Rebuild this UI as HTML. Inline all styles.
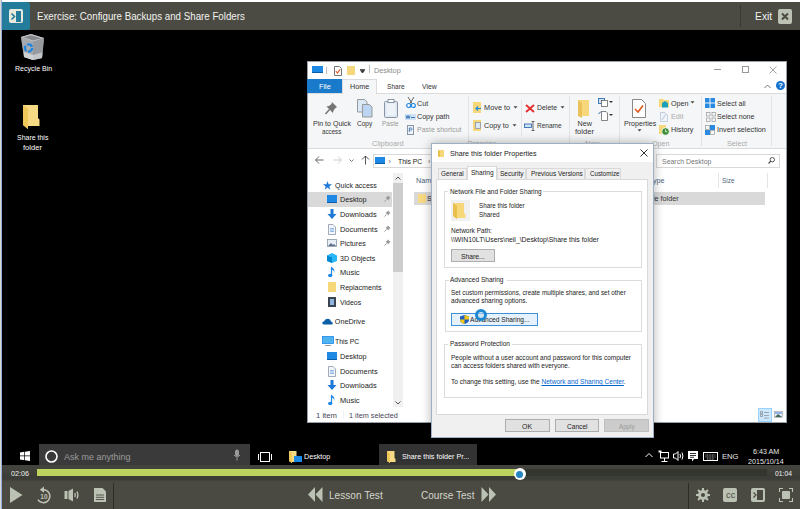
<!DOCTYPE html>
<html><head><meta charset="utf-8">
<style>
*{margin:0;padding:0;box-sizing:border-box}
html,body{width:800px;height:509px;overflow:hidden;background:#000;font-family:"Liberation Sans",sans-serif;position:relative}
.a{position:absolute}
.t{position:absolute;white-space:nowrap;line-height:1;transform-origin:0 0}
svg{position:absolute;overflow:visible}
</style></head><body>
<div class="a" style="left:0px;top:2px;width:800px;height:28px;background:#4b4b44"></div>
<div class="a" style="left:0px;top:2px;width:30px;height:28px;background:#237c9a;border-radius:0 3px 2px 0"></div>
<div class="a" style="left:9px;top:9px;width:14px;height:14px;background:#e8e9dd;border-radius:2px"></div>
<div class="a" style="left:16px;top:10.5px;width:5px;height:11px;background:#237c9a"></div>
<svg style="left:11px;top:13px" width="5" height="7"><path d="M0.5 0.5 L3.5 3.5 L0.5 6.5" stroke="#237c9a" stroke-width="1.6" fill="none"/></svg>
<div class="t" style="left:37px;top:12px;font-size:10.0px;color:#f2f2ee;transform:scaleX(0.974);">Exercise: Configure Backups and Share Folders</div>
<div class="a" style="left:740px;top:5px;width:1px;height:22px;background:#3a3a34"></div>
<div class="t" style="left:755px;top:12px;font-size:10.0px;color:#f2f2ee;transform:scaleX(1.031);">Exit</div>
<div class="a" style="left:778px;top:9px;width:14px;height:15px;background:#bcc2b3;border-radius:2px"></div>
<svg style="left:781px;top:12px" width="8" height="9"><path d="M1 1.5 L7 7.5 M7 1.5 L1 7.5" stroke="#4b4b44" stroke-width="2"/></svg>
<div class="a" style="left:0px;top:0px;width:800px;height:2px;background:#fff"></div>
<svg style="left:20px;top:33px" width="26" height="28"><path d="M1 4 L11 1 L24 5 L22 25 L13 27 L4 24Z" fill="#8e9297"/><path d="M1 4 L13 8.5 L13 27 L4 24Z" fill="#a6aaae"/><path d="M13 8.5 L24 5 L22 25 L13 27Z" fill="#979ba0"/><path d="M1 4 L11 1 L24 5 L13 8.5Z" fill="#c3c6c9"/><path d="M3.5 4.3 L11 2.2 L21.5 5.2 L13 7.6Z" fill="#85898e"/><path d="M4 19 L13 22 L13 27 L4 24Z" fill="#cfd2d5"/><path d="M13 22 L22.3 19.5 L22 25 L13 27Z" fill="#c4c7ca"/><circle cx="8.5" cy="15" r="3.6" stroke="#1e86e0" stroke-width="2.3" fill="none" stroke-dasharray="6 1.5"/></svg>
<div class="t" style="left:14.5px;top:65px;font-size:7.2px;color:#fff;transform:scaleX(0.980);">Recycle Bin</div>
<svg style="left:23px;top:105px" width="17" height="25"><path d="M0 0 H15 V13 L16.5 14.5 V21 H5 L5 24 L0 20Z" fill="#f8da84"/><path d="M0 0 L5 3.5 V24 L0 20Z" fill="#f0c85a"/></svg>
<div class="t" style="left:17px;top:134px;font-size:7.2px;color:#fff;transform:scaleX(0.969);">Share this</div>
<div class="t" style="left:23px;top:144px;font-size:7.2px;color:#fff;transform:scaleX(1.056);">folder</div>
<div class="a" style="left:307px;top:61px;width:480px;height:362px;background:#fff;border:1px solid #9aa0a8"></div>
<div class="a" style="left:312px;top:66px;width:11px;height:7px;background:#1e88e5;border-bottom:1px solid #0d5ea8"></div>
<div class="a" style="left:326px;top:67px;width:1px;height:7px;background:#bbb"></div>
<svg style="left:334px;top:66px" width="8" height="10"><path d="M0.5 0.5 H5.5 L7.5 2.5 V9.5 H0.5Z" stroke="#777" fill="#fff"/><path d="M1.8 5 L3.5 7 L6.2 3.3" stroke="#e0561b" stroke-width="1.1" fill="none"/></svg>
<div class="a" style="left:347px;top:66px;width:8px;height:9px;background:#f6d87a"></div>
<svg style="left:360px;top:69px" width="6" height="5"><path d="M0 0.5 H5 M0.5 1.5 L2.5 4 L4.5 1.5Z" stroke="#333" fill="#333" stroke-width="0.8"/></svg>
<div class="a" style="left:369px;top:65px;width:1px;height:8px;background:#bbb"></div>
<div class="t" style="left:374px;top:67px;font-size:7.0px;color:#8a8a8a;transform:scaleX(1.040);">Desktop</div>
<div class="a" style="left:714px;top:69px;width:7px;height:1px;background:#999"></div>
<div class="a" style="left:742px;top:66px;width:7px;height:7px;border:1px solid #999"></div>
<svg style="left:769px;top:66px" width="8" height="8"><path d="M0.5 0.5 L7.5 7.5 M7.5 0.5 L0.5 7.5" stroke="#999" stroke-width="0.9"/></svg>
<svg style="left:764px;top:84px" width="7" height="5"><path d="M0.5 4 L3.5 1 L6.5 4" stroke="#777" fill="none"/></svg>
<div class="a" style="left:776px;top:81px;width:9px;height:9px;border-radius:50%;background:#1672d0"></div>
<div class="t" style="left:778.2px;top:82px;font-size:7.5px;font-weight:bold;color:#fff">?</div>
<div class="a" style="left:307px;top:79px;width:35px;height:14px;background:#1979ca"></div>
<div class="t" style="left:319px;top:83px;font-size:7.0px;color:#fff;transform:scaleX(1.048);">File</div>
<div class="a" style="left:342px;top:79px;width:35px;height:15px;background:#f5f6f7;border:1px solid #dadbdc;border-bottom:none"></div>
<div class="t" style="left:350px;top:83px;font-size:7.0px;color:#333;transform:scaleX(1.033);">Home</div>
<div class="t" style="left:386.8px;top:83px;font-size:7.0px;color:#333;transform:scaleX(0.942);">Share</div>
<div class="t" style="left:422px;top:83px;font-size:7.0px;color:#333;transform:scaleX(0.984);">View</div>
<div class="a" style="left:308px;top:93px;width:478px;height:56px;background:#f5f6f7;border-top:1px solid #dadbdc;border-bottom:1px solid #dadbdc"></div>
<div class="a" style="left:343px;top:93px;width:33px;height:1px;background:#f5f6f7"></div>
<svg style="left:325px;top:101px" width="13" height="14"><path d="M7 1 L12 6 L10.5 7 L8.5 9.5 L8 12 L1.5 5.5 L4 5 L6.5 3Z" fill="#747474"/><path d="M4.5 8.5 L0.5 13" stroke="#747474" stroke-width="1.5"/></svg>
<div class="t" style="left:312.6px;top:120px;font-size:7.2px;color:#333;transform:scaleX(0.978);">Pin to Quick</div>
<div class="t" style="left:322px;top:128px;font-size:7.2px;color:#333;transform:scaleX(0.864);">access</div>
<svg style="left:357px;top:99px" width="16" height="19"><path d="M0.5 0.5 H7.5 L10 3 V13 H0.5Z" fill="#dbe8f7" stroke="#999"/><path d="M5.5 5.5 H12.5 L15 8 V18 H5.5Z" fill="#bcd5f2" stroke="#999"/></svg>
<div class="t" style="left:357px;top:120px;font-size:7.2px;color:#333;transform:scaleX(0.909);">Copy</div>
<svg style="left:384px;top:99px" width="14" height="18"><rect x="0.5" y="2.5" width="13" height="16" rx="1" fill="#dde5ee" stroke="#8a96a6"/><rect x="4" y="0.5" width="6" height="3" fill="#fff" stroke="#8a96a6"/><rect x="2.5" y="4.5" width="9" height="12" fill="#eef3f8"/></svg>
<div class="t" style="left:382px;top:120px;font-size:7.2px;color:#999;transform:scaleX(0.901);">Paste</div>
<svg style="left:406px;top:97px" width="10" height="11"><path d="M2 0 L6.5 7 M8 0 L3.5 7" stroke="#555" stroke-width="0.9"/><circle cx="2.7" cy="8.5" r="2" stroke="#1e88e5" stroke-width="1.2" fill="none"/><circle cx="7.3" cy="8.5" r="2" stroke="#1e88e5" stroke-width="1.2" fill="none"/></svg>
<div class="t" style="left:417px;top:100px;font-size:7.2px;color:#333;transform:scaleX(1.000);">Cut</div>
<svg style="left:405px;top:114px" width="11" height="6"><rect x="0" y="0" width="11" height="6" fill="#cfe2f5"/><path d="M1 1.5 L2 4.5 L3 1.5 L4 4.5 L5 1.5 M6 3.5 H10" stroke="#1d5fa8" stroke-width="0.8" fill="none"/></svg>
<div class="t" style="left:417px;top:113px;font-size:7.2px;color:#333;transform:scaleX(0.992);">Copy path</div>
<svg style="left:407px;top:125px" width="7" height="10"><rect x="0.5" y="0.5" width="6" height="9" fill="#eef2f7" stroke="#8a96a6"/><path d="M2.3 7 V3 H4.3 Q5 3 5 4 Q5 5 4.3 5 H2.3" stroke="#1d5fa8" stroke-width="0.7" fill="none"/></svg>
<div class="t" style="left:417px;top:126px;font-size:7.2px;color:#999;transform:scaleX(0.967);">Paste shortcut</div>
<div class="t" style="left:372px;top:140px;font-size:7.2px;color:#aaa;transform:scaleX(1.025);">Clipboard</div>
<div class="a" style="left:468px;top:96px;width:1px;height:50px;background:#e2e3e4"></div>
<svg style="left:473px;top:102px" width="9" height="12"><rect x="0" y="0" width="8" height="11" fill="#f6d87a"/><path d="M8 6.5 H3 M5 4.5 L3 6.5 L5 8.5" stroke="#1e88e5" stroke-width="1.2" fill="none"/></svg>
<div class="t" style="left:484.4px;top:104px;font-size:7.2px;color:#333;transform:scaleX(1.024);">Move to</div>
<svg style="left:512.5px;top:106px" width="5" height="3"><path d="M0.5 0.3 H4.5 L2.5 2.6Z" fill="#444"/></svg>
<svg style="left:473px;top:120px" width="9" height="12"><rect x="0" y="0" width="8" height="11" fill="#f6d87a"/><rect x="2.5" y="2.5" width="5" height="6" fill="#dbe8f7" stroke="#8a96a6" stroke-width="0.8"/></svg>
<div class="t" style="left:484.4px;top:122px;font-size:7.2px;color:#333;transform:scaleX(1.002);">Copy to</div>
<svg style="left:511.5px;top:124px" width="5" height="3"><path d="M0.5 0.3 H4.5 L2.5 2.6Z" fill="#444"/></svg>
<div class="a" style="left:521px;top:100px;width:1px;height:36px;background:#e2e3e4"></div>
<svg style="left:525px;top:104px" width="10" height="9"><path d="M1 1 L9 8 M9 1 L1 8" stroke="#e3302f" stroke-width="1.9"/></svg>
<div class="t" style="left:537px;top:104px;font-size:7.2px;color:#333;transform:scaleX(0.965);">Delete</div>
<svg style="left:559.5px;top:106px" width="5" height="3"><path d="M0.5 0.3 H4.5 L2.5 2.6Z" fill="#444"/></svg>
<svg style="left:524px;top:121px" width="12" height="10"><rect x="0.5" y="3" width="7" height="3.5" fill="#cfe2f5" stroke="#1d5fa8" stroke-width="0.8"/><path d="M9 0.5 V9.5 M7.5 0.5 H10.5 M7.5 9.5 H10.5" stroke="#444" stroke-width="0.8"/></svg>
<div class="t" style="left:537px;top:122px;font-size:7.2px;color:#333;transform:scaleX(0.906);">Rename</div>
<div class="t" style="left:467px;top:140px;font-size:7.2px;color:#aaa;">Organize</div>
<div class="a" style="left:569px;top:96px;width:1px;height:50px;background:#e2e3e4"></div>
<svg style="left:578px;top:100px" width="12" height="17"><path d="M0 0 H11 V16 H0Z" fill="#f6d87a"/><path d="M0 0 L4 3 V18 L0 16Z" fill="#eac25a"/></svg>
<div class="t" style="left:577.5px;top:120px;font-size:7.2px;color:#333;transform:scaleX(1.000);">New</div>
<div class="t" style="left:575px;top:128px;font-size:7.2px;color:#333;transform:scaleX(1.056);">folder</div>
<svg style="left:598px;top:98px" width="16" height="9"><rect x="0.5" y="0.5" width="6" height="5" fill="#cfe2f5" stroke="#1d5fa8" stroke-width="0.8"/><rect x="3.5" y="2.5" width="6" height="6" fill="#fff" stroke="#666" stroke-width="0.8"/><path d="M11 3 H15 L13 5Z" fill="#333"/></svg>
<svg style="left:598px;top:111px" width="16" height="10"><path d="M3.5 0.5 H8 L9.5 2 V9.5 H3.5Z" fill="#fff" stroke="#666" stroke-width="0.8"/><path d="M0.5 3 L3 0.5" stroke="#1d5fa8"/><path d="M11 3 H15 L13 5Z" fill="#333"/></svg>
<div class="t" style="left:585px;top:140px;font-size:7.2px;color:#aaa;">New</div>
<div class="a" style="left:619px;top:96px;width:1px;height:50px;background:#e2e3e4"></div>
<svg style="left:632px;top:99px" width="14" height="19"><path d="M0.5 0.5 H9.5 L13.5 4.5 V18.5 H0.5Z" fill="#fff" stroke="#888"/><path d="M3 10 L6 13 L11 6.5" stroke="#e0561b" stroke-width="1.6" fill="none"/></svg>
<div class="t" style="left:623.7px;top:120px;font-size:7.2px;color:#333;transform:scaleX(0.986);">Properties</div>
<svg style="left:637px;top:129px" width="5" height="3"><path d="M0.5 0.3 H4.5 L2.5 2.6Z" fill="#444"/></svg>
<svg style="left:659px;top:99px" width="10" height="9"><path d="M0 0 H4 L5 1 H10 V8 H0Z" fill="#f6d87a"/><path d="M3 8.5 V4 L6 2 L9 4 V8.5" fill="#1ba0b8"/></svg>
<div class="t" style="left:671px;top:100px;font-size:7.2px;color:#333;transform:scaleX(1.000);">Open</div>
<svg style="left:690px;top:101px" width="5" height="3"><path d="M0.5 0.3 H4.5 L2.5 2.6Z" fill="#444"/></svg>
<svg style="left:660px;top:112px" width="8" height="10"><path d="M0.5 0.5 H5 L7.5 3 V9.5 H0.5Z" fill="#f0f4f9" stroke="#b8c6d8" stroke-width="0.8"/><path d="M2 8 L6 2" stroke="#b8c6d8"/></svg>
<div class="t" style="left:671px;top:113px;font-size:7.2px;color:#aaa;transform:scaleX(1.000);">Edit</div>
<svg style="left:659px;top:125px" width="11" height="11"><rect x="0" y="0" width="7" height="9" fill="#f6d87a"/><circle cx="6.5" cy="6.5" r="3.8" fill="#3f8f3a" stroke="#fff" stroke-width="0.8"/><path d="M6.5 4.5 V6.7 H8.3" stroke="#fff" stroke-width="0.8" fill="none"/></svg>
<div class="t" style="left:671px;top:126px;font-size:7.2px;color:#333;transform:scaleX(1.000);">History</div>
<div class="t" style="left:652px;top:140px;font-size:7.2px;color:#aaa;">Open</div>
<div class="a" style="left:701px;top:96px;width:1px;height:50px;background:#e2e3e4"></div>
<svg style="left:705px;top:98px" width="10" height="10"><rect x="0" y="0" width="10" height="10" fill="#2a8ae0"/><path d="M5 0 V10 M0 5 H10" stroke="#fff" stroke-width="0.9"/></svg>
<div class="t" style="left:717px;top:100px;font-size:7.2px;color:#333;transform:scaleX(0.982);">Select all</div>
<svg style="left:705.5px;top:111.5px" width="9.5" height="9.5"><rect x="0.5" y="0.5" width="3.5" height="3.5" stroke="#999" stroke-width="0.7" fill="none"/><rect x="6" y="0.5" width="3.5" height="3.5" stroke="#999" stroke-width="0.7" fill="none"/><rect x="0.5" y="6" width="3.5" height="3.5" stroke="#999" stroke-width="0.7" fill="none"/><rect x="6" y="6" width="3.5" height="3.5" stroke="#999" stroke-width="0.7" fill="none"/></svg>
<div class="t" style="left:717px;top:113px;font-size:7.2px;color:#333;transform:scaleX(0.987);">Select none</div>
<svg style="left:705px;top:124.5px" width="10" height="10"><rect x="5" y="0" width="5" height="5" fill="#2a8ae0"/><rect x="0" y="5" width="5" height="5" fill="#2a8ae0"/><rect x="0.5" y="0.5" width="4" height="4" stroke="#999" stroke-width="0.7" fill="none"/><rect x="5.5" y="5.5" width="4" height="4" stroke="#999" stroke-width="0.7" fill="none"/></svg>
<div class="t" style="left:717px;top:126px;font-size:7.2px;color:#333;transform:scaleX(1.011);">Invert selection</div>
<div class="t" style="left:727px;top:140px;font-size:7.2px;color:#aaa;">Select</div>
<div class="a" style="left:771px;top:96px;width:1px;height:50px;background:#e2e3e4"></div>
<svg style="left:315px;top:156px" width="9" height="8"><path d="M0.5 4 H8.5 M4 0.5 L0.5 4 L4 7.5" stroke="#666" stroke-width="1" fill="none"/></svg>
<svg style="left:333px;top:156px" width="9" height="8"><path d="M0.5 4 H8.5 M5 0.5 L8.5 4 L5 7.5" stroke="#ccc" stroke-width="1" fill="none"/></svg>
<svg style="left:349px;top:159px" width="5" height="3"><path d="M0.5 0.5 L2.5 2.5 L4.5 0.5" stroke="#777" fill="none"/></svg>
<svg style="left:361px;top:155px" width="9" height="10"><path d="M4.5 9.5 V1 M1 4.5 L4.5 1 L8 4.5" stroke="#555" stroke-width="1" fill="none"/></svg>
<div class="a" style="left:373px;top:154px;width:100px;height:14px;border:1px solid #d9d9d9"></div>
<div class="a" style="left:375px;top:157px;width:10px;height:7px;background:#1e88e5;border-bottom:1px solid #0d5ea8"></div>
<div class="t" style="left:388.5px;top:158px;font-size:7.0px;color:#666;">&#8250;</div>
<div class="t" style="left:398px;top:158px;font-size:7.2px;color:#222;transform:scaleX(0.950);">This PC</div>
<div class="t" style="left:428px;top:158px;font-size:7.0px;color:#666;">&#8250;</div>
<div class="a" style="left:656px;top:154px;width:124px;height:14px;border:1px solid #d9d9d9"></div>
<div class="t" style="left:662px;top:158px;font-size:7.2px;color:#777;transform:scaleX(0.966);">Search Desktop</div>
<svg style="left:768px;top:157px" width="7" height="7"><circle cx="4.3" cy="2.7" r="2.2" stroke="#444" stroke-width="0.9" fill="none"/><path d="M2.8 4.2 L0.5 6.5" stroke="#444" stroke-width="1.1"/></svg>
<div class="t" style="left:416px;top:177px;font-size:7.2px;color:#4c607a;">Nam</div>
<div class="t" style="left:649px;top:177px;font-size:7.2px;color:#4c607a;">Type</div>
<div class="t" style="left:722px;top:177px;font-size:7.2px;color:#4c607a;transform:scaleX(0.889);">Size</div>
<div class="a" style="left:718px;top:173px;width:1px;height:15px;background:#e5e5e5"></div>
<div class="a" style="left:767px;top:173px;width:1px;height:15px;background:#e5e5e5"></div>
<div class="a" style="left:414px;top:192px;width:351px;height:13px;background:#d9d9d9"></div>
<div class="a" style="left:418px;top:193.5px;width:7.5px;height:9px;background:#f8da84"></div>
<div class="t" style="left:427px;top:195px;font-size:7.0px;color:#222;">Share this folder</div>
<div class="t" style="left:647px;top:195px;font-size:7.2px;color:#333;">File folder</div>
<div class="a" style="left:393px;top:173px;width:10px;height:234px;background:#f0f0f0"></div>
<div class="a" style="left:393px;top:183px;width:10px;height:89px;background:#cdcdcd"></div>
<svg style="left:395px;top:176px" width="6" height="4"><path d="M0.5 3.5 L3 1 L5.5 3.5" stroke="#555" fill="none"/></svg>
<svg style="left:395px;top:401px" width="6" height="4"><path d="M0.5 0.5 L3 3 L5.5 0.5" stroke="#555" fill="none"/></svg>
<div class="a" style="left:308px;top:192px;width:84px;height:15px;background:#d9d9d9"></div>
<svg style="left:323px;top:181px" width="9" height="9"><path d="M4.5 0 L5.6 3.3 H9 L6.3 5.4 L7.3 8.7 L4.5 6.6 L1.7 8.7 L2.7 5.4 L0 3.3 H3.4Z" fill="#1e78d6"/></svg>
<div class="t" style="left:335px;top:182px;font-size:7.2px;color:#222;transform:scaleX(0.979);">Quick access</div>
<div class="a" style="left:327px;top:195px;width:10px;height:8px;background:#1e88e5;border-bottom:1px solid #0d5ea8"></div>
<div class="t" style="left:340px;top:196px;font-size:7.2px;color:#222;transform:scaleX(1.010);">Desktop</div>
<svg style="left:384px;top:195px" width="7" height="7"><path d="M4 0.5 L6.5 3 L5 4 L4.5 5.5 L1.5 2.5 L3 2Z" fill="#999"/><path d="M2.5 4.5 L0.5 6.5" stroke="#999"/></svg>
<svg style="left:327px;top:209px" width="10" height="11"><path d="M3.5 0 H6.5 V5 H9.5 L5 10 L0.5 5 H3.5Z" fill="#1e78d6"/></svg>
<div class="t" style="left:340px;top:211px;font-size:7.2px;color:#222;transform:scaleX(1.029);">Downloads</div>
<svg style="left:384px;top:210px" width="7" height="7"><path d="M4 0.5 L6.5 3 L5 4 L4.5 5.5 L1.5 2.5 L3 2Z" fill="#999"/><path d="M2.5 4.5 L0.5 6.5" stroke="#999"/></svg>
<svg style="left:328px;top:224px" width="8" height="11"><path d="M0.5 0.5 H5 L7.5 3 V10.5 H0.5Z" fill="#f4f7fb" stroke="#8a96a6" stroke-width="0.8"/><path d="M2 4.5 H6 M2 6 H6 M2 7.5 H6" stroke="#4a8bd6" stroke-width="0.6"/></svg>
<div class="t" style="left:340px;top:226px;font-size:7.2px;color:#222;transform:scaleX(1.035);">Documents</div>
<svg style="left:384px;top:225px" width="7" height="7"><path d="M4 0.5 L6.5 3 L5 4 L4.5 5.5 L1.5 2.5 L3 2Z" fill="#999"/><path d="M2.5 4.5 L0.5 6.5" stroke="#999"/></svg>
<svg style="left:327px;top:239px" width="10" height="9"><rect x="0.5" y="0.5" width="9" height="7" fill="#e8eef5" stroke="#8a96a6" stroke-width="0.8"/><path d="M1 7 L4 4 L6 6 L7 5 L9 7Z" fill="#5b6f8a"/></svg>
<div class="t" style="left:340px;top:240px;font-size:7.2px;color:#222;transform:scaleX(0.990);">Pictures</div>
<svg style="left:384px;top:239px" width="7" height="7"><path d="M4 0.5 L6.5 3 L5 4 L4.5 5.5 L1.5 2.5 L3 2Z" fill="#999"/><path d="M2.5 4.5 L0.5 6.5" stroke="#999"/></svg>
<svg style="left:327px;top:253px" width="10" height="10"><path d="M5 0 L10 2.5 V8 L5 10 L0 8 V2.5Z" fill="#29b6f6"/><path d="M5 4.5 V10 L0 8 V2.5Z" fill="#0288d1"/></svg>
<div class="t" style="left:340px;top:255px;font-size:7.2px;color:#222;transform:scaleX(0.993);">3D Objects</div>
<svg style="left:328px;top:267px" width="8" height="11"><path d="M3.5 0 V8" stroke="#1e88e5" stroke-width="1.2"/><ellipse cx="2.2" cy="8.5" rx="2.2" ry="1.8" fill="#1e88e5"/><path d="M3.5 0 Q7.5 2 6 6 Q6.5 3 3.5 2.5" fill="#1e88e5"/></svg>
<div class="t" style="left:340px;top:269px;font-size:7.2px;color:#222;transform:scaleX(1.041);">Music</div>
<div class="a" style="left:328px;top:282px;width:8px;height:10px;background:#f6d87a"></div>
<div class="t" style="left:340px;top:284px;font-size:7.2px;color:#222;transform:scaleX(0.988);">Replacments</div>
<svg style="left:328px;top:297px" width="8" height="10"><rect x="0" y="0" width="8" height="10" fill="#3b4350"/><rect x="2" y="2" width="4" height="6" fill="#8fb4e0"/></svg>
<div class="t" style="left:340px;top:299px;font-size:7.2px;color:#222;transform:scaleX(0.966);">Videos</div>
<svg style="left:322px;top:318px" width="11" height="7"><path d="M2 6.5 Q0 6.5 0.3 4.8 Q0.6 3.5 2 3.6 Q3 0.5 6 0.8 Q8.5 1 9 3.5 Q11 3.8 10.8 5.5 Q10.5 6.5 9.5 6.5Z" fill="#0d5ea8"/></svg>
<div class="t" style="left:334.8px;top:318px;font-size:7.2px;color:#222;transform:scaleX(1.000);">OneDrive</div>
<svg style="left:322px;top:336px" width="12" height="10"><rect x="0.5" y="0.5" width="11" height="7" fill="#4fb3f0" stroke="#1e88e5" stroke-width="0.8"/><path d="M3 9.5 H9" stroke="#999"/></svg>
<div class="t" style="left:335px;top:338px;font-size:7.2px;color:#222;transform:scaleX(0.950);">This PC</div>
<div class="a" style="left:327px;top:352px;width:10px;height:8px;background:#1e88e5;border-bottom:1px solid #0d5ea8"></div>
<div class="t" style="left:340px;top:353px;font-size:7.2px;color:#222;transform:scaleX(1.010);">Desktop</div>
<svg style="left:328px;top:366px" width="8" height="11"><path d="M0.5 0.5 H5 L7.5 3 V10.5 H0.5Z" fill="#f4f7fb" stroke="#8a96a6" stroke-width="0.8"/><path d="M2 4.5 H6 M2 6 H6 M2 7.5 H6" stroke="#4a8bd6" stroke-width="0.6"/></svg>
<div class="t" style="left:340px;top:368px;font-size:7.2px;color:#222;transform:scaleX(1.035);">Documents</div>
<svg style="left:327px;top:380px" width="10" height="11"><path d="M3.5 0 H6.5 V5 H9.5 L5 10 L0.5 5 H3.5Z" fill="#1e78d6"/></svg>
<div class="t" style="left:340px;top:382px;font-size:7.2px;color:#222;transform:scaleX(1.029);">Downloads</div>
<svg style="left:328px;top:395px" width="8" height="11"><path d="M3.5 0 V8" stroke="#1e88e5" stroke-width="1.2"/><ellipse cx="2.2" cy="8.5" rx="2.2" ry="1.8" fill="#1e88e5"/><path d="M3.5 0 Q7.5 2 6 6 Q6.5 3 3.5 2.5" fill="#1e88e5"/></svg>
<div class="t" style="left:340px;top:397px;font-size:7.2px;color:#222;transform:scaleX(1.041);">Music</div>
<div class="t" style="left:316px;top:412px;font-size:7.2px;color:#445;transform:scaleX(1.067);">1 item</div>
<div class="a" style="left:343px;top:410px;width:1px;height:9px;background:#f3f3f3"></div>
<div class="t" style="left:349px;top:412px;font-size:7.2px;color:#445;transform:scaleX(1.011);">1 item selected</div>
<div class="a" style="left:758px;top:408px;width:14px;height:14px;background:#cce8ff;border:1px solid #99d1ff"></div>
<svg style="left:760px;top:411px" width="10" height="8"><path d="M0.5 0.5 H2.5 V2.5 H0.5Z M0.5 3.5 H2.5 V5.5 H0.5Z M4 1.5 H9 M4 4.5 H9 M4 7 H9" stroke="#777" stroke-width="0.6" fill="none"/></svg>
<svg style="left:774px;top:411px" width="9" height="7"><rect x="0.5" y="0.5" width="8" height="6" fill="#eef" stroke="#999" stroke-width="0.6"/><path d="M1 6 L4 3 L8 6Z" fill="#3a6a5a"/><path d="M1 2 H8" stroke="#3a7ad0"/></svg>
<div class="a" style="left:431px;top:143px;width:223px;height:295px;background:#f0f0f0;border:1px solid #9fb0c4;box-shadow:0 0 10px rgba(0,0,0,0.3)"></div>
<div class="a" style="left:432px;top:144px;width:221px;height:18px;background:#fff"></div>
<svg style="left:438px;top:150px" width="7" height="7"><path d="M0 0 H6 V7 H0Z" fill="#f6d87a"/><path d="M0 0 L2 1.5 V7 L0 6Z" fill="#e9bf4e"/></svg>
<div class="t" style="left:450px;top:150px;font-size:7.2px;color:#222;transform:scaleX(0.995);">Share this folder Properties</div>
<svg style="left:640px;top:149px" width="8" height="8"><path d="M0.5 0.5 L7.5 7.5 M7.5 0.5 L0.5 7.5" stroke="#333" stroke-width="1"/></svg>
<div class="a" style="left:438px;top:168px;width:29px;height:11px;background:#f0f0f0;border:1px solid #d9d9d9;border-bottom:none"></div>
<div class="t" style="left:441px;top:170px;font-size:7.0px;color:#222;transform:scaleX(0.907);">General</div>
<div class="a" style="left:497px;top:168px;width:29px;height:11px;background:#f0f0f0;border:1px solid #d9d9d9;border-bottom:none"></div>
<div class="t" style="left:500px;top:170px;font-size:7.0px;color:#222;transform:scaleX(0.932);">Security</div>
<div class="a" style="left:526px;top:168px;width:59px;height:11px;background:#f0f0f0;border:1px solid #d9d9d9;border-bottom:none"></div>
<div class="t" style="left:531px;top:170px;font-size:7.0px;color:#222;transform:scaleX(0.923);">Previous Versions</div>
<div class="a" style="left:585px;top:168px;width:36px;height:11px;background:#f0f0f0;border:1px solid #d9d9d9;border-bottom:none"></div>
<div class="t" style="left:589.5px;top:170px;font-size:7.0px;color:#222;transform:scaleX(0.892);">Customize</div>
<div class="a" style="left:436px;top:178.5px;width:212px;height:236px;background:#fff;border:1px solid #d9d9d9"></div>
<div class="a" style="left:467px;top:166px;width:30px;height:14px;background:#fff;border:1px solid #d9d9d9;border-bottom:none"></div>
<div class="t" style="left:471px;top:169px;font-size:7.0px;color:#222;transform:scaleX(0.936);">Sharing</div>
<div class="a" style="left:444px;top:191px;width:198px;height:77px;border:1px solid #dcdcdc"></div>
<div class="a" style="left:448px;top:187px;width:95px;height:8px;background:#fff"></div>
<div class="t" style="left:450.2px;top:188px;font-size:7.0px;color:#222;transform:scaleX(0.913);">Network File and Folder Sharing</div>
<div class="a" style="left:451px;top:200px;width:19px;height:21px;background:#f0f0f0"></div>
<svg style="left:453px;top:203px" width="13" height="16"><path d="M0 0 H11 V10 L12.5 11.5 V15 H4 L4 16 L0 13Z" fill="#f6d87a"/><path d="M0 0 L4 3 V16 L0 13Z" fill="#e9bf4e"/></svg>
<div class="t" style="left:478.6px;top:202px;font-size:7.0px;color:#222;transform:scaleX(0.895);">Share this folder</div>
<div class="t" style="left:478.6px;top:211px;font-size:7.0px;color:#222;transform:scaleX(0.909);">Shared</div>
<div class="t" style="left:451px;top:227px;font-size:7.0px;color:#222;transform:scaleX(0.930);">Network Path:</div>
<div class="t" style="left:451px;top:236px;font-size:7.0px;color:#222;transform:scaleX(0.983);">\\WIN10LT\Users\neil_\Desktop\Share this folder</div>
<div class="a" style="left:451px;top:249px;width:44px;height:13px;background:#e1e1e1;border:1px solid #adadad"></div>
<div class="t" style="left:461px;top:253px;font-size:7.0px;color:#222;transform:scaleX(0.968);">Share...</div>
<div class="a" style="left:445px;top:279.5px;width:197px;height:52.0px;border:1px solid #dcdcdc"></div>
<div class="a" style="left:449px;top:275.5px;width:58px;height:8px;background:#fff"></div>
<div class="t" style="left:449.7px;top:276px;font-size:7.0px;color:#222;transform:scaleX(0.934);">Advanced Sharing</div>
<div class="t" style="left:451px;top:289px;font-size:7.0px;color:#222;transform:scaleX(0.913);">Set custom permissions, create multiple shares, and set other</div>
<div class="t" style="left:451px;top:297px;font-size:7.0px;color:#222;transform:scaleX(0.935);">advanced sharing options.</div>
<div class="a" style="left:451px;top:312.5px;width:87px;height:13px;background:#e5f1fb;border:1px solid #3c8fd8"></div>
<svg style="left:460px;top:315px" width="9" height="9"><path d="M4.5 0 L9 1.5 V4.5 Q9 7.5 4.5 9 Q0 7.5 0 4.5 V1.5Z" fill="#1f5fbf"/><path d="M4.5 0 L9 1.5 V4.5 H4.5Z M4.5 4.5 H0 Q0 7.5 4.5 9Z" fill="#f5c518"/></svg>
<div class="t" style="left:470px;top:316px;font-size:7.0px;color:#222;transform:scaleX(0.944);">Advanced Sharing...</div>
<div class="a" style="left:444px;top:343.5px;width:198px;height:54.5px;border:1px solid #dcdcdc"></div>
<div class="a" style="left:448px;top:339.5px;width:64px;height:8px;background:#fff"></div>
<div class="t" style="left:449.5px;top:340px;font-size:7.0px;color:#222;transform:scaleX(0.933);">Password Protection</div>
<div class="t" style="left:451px;top:354px;font-size:7.0px;color:#222;transform:scaleX(0.931);">People without a user account and password for this computer</div>
<div class="t" style="left:451px;top:362px;font-size:7.0px;color:#222;transform:scaleX(0.925);">can access folders shared with everyone.</div>
<div class="t" style="left:451px;top:378px;font-size:7.0px;color:#222;transform:scaleX(0.937);">To change this setting, use the <span style="color:#0066cc;text-decoration:underline">Network and Sharing Center</span>.</div>
<div class="a" style="left:505px;top:419px;width:45px;height:13px;background:#e1e1e1;border:1px solid #adadad"></div>
<div class="t" style="left:522.3px;top:423px;font-size:7.0px;color:#222;transform:scaleX(0.995);">OK</div>
<div class="a" style="left:555px;top:419px;width:44px;height:13px;background:#e1e1e1;border:1px solid #adadad"></div>
<div class="t" style="left:567px;top:423px;font-size:7.0px;color:#222;transform:scaleX(0.941);">Cancel</div>
<div class="a" style="left:604px;top:419px;width:45px;height:13px;background:#cccccc;border:1px solid #bfbfbf"></div>
<div class="t" style="left:618.6px;top:423px;font-size:7.0px;color:#9a9a9a;transform:scaleX(0.886);">Apply</div>
<div class="a" style="left:475.25px;top:309px;width:12px;height:12px;border-radius:50%;border:3px solid #1e88d0;background:rgba(190,220,245,0.6)"></div>
<div class="a" style="left:39px;top:444px;width:211px;height:21px;background:#3a3a3a"></div>
<svg style="left:20px;top:451px" width="10" height="10"><path d="M0 1.4 L4.3 0.8 V4.6 H0Z M5 0.7 L10 0 V4.6 H5Z M0 5.3 H4.3 V9.2 L0 8.6Z M5 5.3 H10 V10 L5 9.3Z" fill="#fff"/></svg>
<svg style="left:45px;top:450px" width="14" height="14"><circle cx="6.5" cy="6.5" r="5.5" stroke="#fff" stroke-width="1.6" fill="none"/></svg>
<div class="t" style="left:64px;top:453px;font-size:9.0px;color:#9a9a9a;transform:scaleX(1.000);">Ask me anything</div>
<svg style="left:233px;top:449px" width="8" height="12"><rect x="2" y="0.5" width="4" height="7" rx="2" fill="#9a9a9a"/><path d="M1 6 Q4 10 7 6 M4 8.5 V11.5" stroke="#9a9a9a" fill="none"/></svg>
<svg style="left:258px;top:452px" width="14" height="10"><rect x="2.5" y="0.5" width="9" height="9" stroke="#fff" fill="none"/><path d="M0.5 2 V8 M13.5 2 V8" stroke="#fff"/></svg>
<svg style="left:289px;top:451px" width="9" height="12"><path d="M0 0 H7.5 V7 L8.5 8 V11 H3 V12 L0 10Z" fill="#f8da84"/><path d="M0 0 L3 2 V12 L0 10Z" fill="#efc75a"/></svg>
<div class="a" style="left:294px;top:456px;width:8px;height:6px;background:#1e88e5"></div>
<div class="t" style="left:304px;top:453px;font-size:7.2px;color:#fff;transform:scaleX(0.994);">Desktop</div>
<div class="a" style="left:379px;top:444px;width:98px;height:21px;background:#333"></div>
<svg style="left:387px;top:451px" width="9" height="12"><path d="M0 0 H7.5 V7 L8.5 8 V11 H3 V12 L0 10Z" fill="#f8da84"/><path d="M0 0 L3 2 V12 L0 10Z" fill="#efc75a"/></svg>
<div class="t" style="left:402px;top:453px;font-size:7.2px;color:#fff;transform:scaleX(1.002);">Share this folder Pr...</div>
<svg style="left:645px;top:452px" width="8" height="6"><path d="M0.5 5 L4 1.5 L7.5 5" stroke="#fff" fill="none"/></svg>
<svg style="left:658px;top:450px" width="12" height="12"><rect x="0.5" y="0.5" width="3" height="2" fill="#fff"/><rect x="2.5" y="2.5" width="8" height="5.5" stroke="#fff" fill="none"/><path d="M6.5 8 V11 M3.5 11.5 H9.5" stroke="#fff"/></svg>
<svg style="left:673px;top:451px" width="11" height="10"><path d="M0.5 3 H2.5 L5 0.5 V9.5 L2.5 7 H0.5Z" stroke="#fff" fill="none"/><path d="M7 3 Q8 5 7 7 M9 1.5 Q10.8 5 9 8.5" stroke="#fff" fill="none"/></svg>
<svg style="left:688px;top:451px" width="10" height="12"><path d="M0 0 H10 V8 H6 L4 10.5 V8 H0Z" fill="#fff"/><path d="M2 2.5 H8 M2 4.5 H8 M2 6.3 H6" stroke="#000" stroke-width="0.8"/></svg>
<svg style="left:703px;top:452px" width="15" height="9"><rect x="0.5" y="0.5" width="14" height="8" stroke="#fff" fill="none"/><path d="M2.5 3 H12.5 M2.5 5 H12.5 M4 7 H11" stroke="#fff" stroke-width="0.7" stroke-dasharray="1 0.6"/></svg>
<div class="t" style="left:722px;top:453px;font-size:8.0px;color:#e8e8e8;transform:scaleX(0.954);">ENG</div>
<div class="t" style="left:753.3px;top:448px;font-size:7.4px;color:#e8e8e8;transform:scaleX(0.970);">6:43 AM</div>
<div class="t" style="left:748px;top:458px;font-size:8.0px;color:#e8e8e8;transform:scaleX(0.893);">2015/10/14</div>
<div class="a" style="left:0px;top:465px;width:800px;height:44px;background:#4a4a42"></div>
<div class="a" style="left:0px;top:465px;width:800px;height:17px;background:linear-gradient(#43433d 0,#43433d 4px,#3d3d38 11px,#3d3d38 14px,#4a4a42 17px)"></div>
<div class="a" style="left:37px;top:469px;width:482px;height:7px;background:#bcd35f"></div>
<div class="a" style="left:519px;top:469px;width:248px;height:7px;background:#33352f"></div>
<div class="a" style="left:513.5px;top:468px;width:12px;height:12px;border-radius:50%;background:#fff"></div>
<div class="a" style="left:516px;top:470.5px;width:7px;height:7px;border-radius:50%;background:#2585c0"></div>
<div class="t" style="left:10.5px;top:470px;font-size:7.4px;color:#f0f0f0;transform:scaleX(0.972);">02:06</div>
<div class="t" style="left:775.3px;top:470px;font-size:7.4px;color:#f0f0f0;transform:scaleX(0.915);">01:04</div>
<div class="a" style="left:113px;top:483px;width:1px;height:26px;background:#2e2e29"></div>
<div class="a" style="left:688px;top:483px;width:1px;height:26px;background:#2e2e29"></div>
<svg style="left:10px;top:487px" width="13" height="16"><path d="M0 0 L12.5 8 L0 16Z" fill="#bcc2b3"/></svg>
<svg style="left:36px;top:486px" width="16" height="17"><path d="M7.5 3.7 A6.5 6.5 0 1 1 1.9 13.7" stroke="#bcc2b3" stroke-width="1.4" fill="none"/><path d="M3.8 3.7 L8 0.6 V6.8Z" fill="#bcc2b3"/><text x="4.3" y="13" font-size="6.6" font-weight="bold" font-family="Liberation Sans" fill="#bcc2b3">10</text></svg>
<svg style="left:64px;top:488px" width="16" height="14"><rect x="0.5" y="3" width="3" height="8" fill="#bcc2b3"/><path d="M4.5 3 L9 0.5 V13.5 L4.5 11Z" fill="#bcc2b3"/><path d="M10.8 5 Q11.8 7 10.8 9 M13 3.5 Q14.8 7 13 10.5" stroke="#bcc2b3" stroke-width="1.3" fill="none"/></svg>
<svg style="left:94px;top:488px" width="12" height="14"><path d="M0 0 H8.5 L12 3.5 V14 H0Z" fill="#bcc2b3"/><path d="M2 7 H10 M2 9.3 H10 M2 11.5 H10" stroke="#4a4a42" stroke-width="0.9"/></svg>
<svg style="left:308px;top:487px" width="15" height="15"><path d="M7 0 L0 7.5 L7 15Z M14.5 0 L7.5 7.5 L14.5 15Z" fill="#bcc2b3"/></svg>
<div class="t" style="left:329px;top:491px;font-size:10.0px;color:#d4d6cc;transform:scaleX(1.010);">Lesson Test</div>
<div class="t" style="left:421px;top:491px;font-size:10.0px;color:#d4d6cc;transform:scaleX(1.005);">Course Test</div>
<svg style="left:481px;top:487px" width="15" height="15"><path d="M0.5 0 L7.5 7.5 L0.5 15Z M8 0 L15 7.5 L8 15Z" fill="#bcc2b3"/></svg>
<svg style="left:696px;top:488px" width="14" height="14"><g fill="#bcc2b3"><circle cx="7" cy="7" r="5"/><path d="M6 0 H8 V14 H6Z M0 6 H14 V8 H0Z"/><path d="M6 0 H8 V14 H6Z M0 6 H14 V8 H0Z" transform="rotate(45 7 7)"/></g><circle cx="7" cy="7" r="2" fill="#4a4a42"/></svg>
<div class="a" style="left:723px;top:488px;width:14px;height:14px;background:#bcc2b3;border-radius:2px"></div>
<div class="t" style="left:726px;top:490px;font-size:9.4px;color:#4a4a42;font-weight:boldtransform:scaleX(0.900);">cc</div>
<div class="a" style="left:751px;top:488px;width:14px;height:14px;background:#bcc2b3;border-radius:2px"></div>
<div class="a" style="left:757px;top:490px;width:6px;height:10px;background:#4a4a42"></div>
<svg style="left:753px;top:492px" width="4" height="6"><path d="M0.5 0.5 L3 3 L0.5 5.5" stroke="#4a4a42" stroke-width="1.2" fill="none"/></svg>
<svg style="left:779px;top:488px" width="14" height="14"><path d="M0.5 4 V0.5 H4 M10 0.5 H13.5 V4 M13.5 10 V13.5 H10 M4 13.5 H0.5 V10" stroke="#bcc2b3" stroke-width="1.1" fill="none"/><rect x="3" y="3" width="8" height="8" rx="1" fill="#bcc2b3"/></svg>
<div class="a" style="left:0px;top:0px;width:1px;height:509px;background:#dcdad4"></div>
<div class="a" style="left:1px;top:0px;width:1px;height:509px;background:#93abd8"></div>
</body></html>
